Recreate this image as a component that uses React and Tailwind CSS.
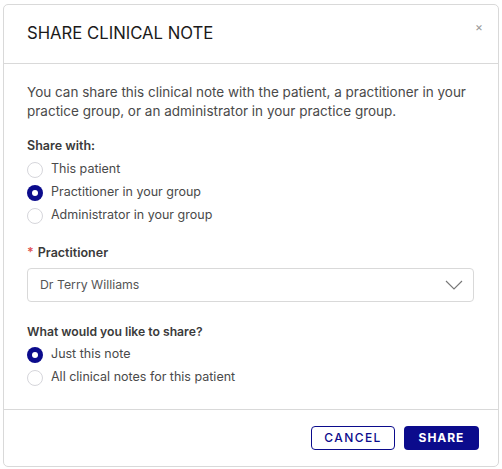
import { useState } from 'react';

const shareWith = ['This patient', 'Practitioner in your group', 'Administrator in your group'];
const shareWhat = ['Just this note', 'All clinical notes for this patient'];

function Radio({ label, checked, onSelect }) {
  return (
    <label className="flex h-[23px] cursor-pointer items-center gap-2" onClick={onSelect}>
      <span
        className={`flex h-4 w-4 items-center justify-center rounded-full ${
          checked ? 'bg-[#0b0b8c]' : 'border border-[#d6d6db] bg-white'
        }`}
      >
        {checked && <span className="h-1.5 w-1.5 rounded-full bg-white" />}
      </span>
      <span className="text-[12.5px] text-[#4a4a4a]">{label}</span>
    </label>
  );
}

export default function App() {
  const [target, setTarget] = useState(1);
  const [scope, setScope] = useState(0);

  return (
    <div className="h-[469px] w-[502px] bg-white px-[3px] pt-[4px] font-['Inter',sans-serif]">
      <div className="flex h-[463px] flex-col rounded-[5px] border border-[#d9d9d9] bg-white">
        <header className="flex h-[59px] items-start justify-between border-b border-[#d9d9d9] pl-[23px] pr-[15px]">
          <h2 className="pt-[18px] text-[16.7px] leading-5 text-[#1a1a1a]">SHARE CLINICAL NOTE</h2>
          <button className="pt-[16px] text-[12px] leading-none text-[#9a9a9a]" aria-label="Close">
            ×
          </button>
        </header>

        <div className="flex-1 px-[23px] pt-[19px]">
          <p className="text-[13.5px] leading-[19px] text-[#4a4a4a]">
            You can share this clinical note with the patient, a practitioner in your practice group, or an administrator in your practice group.
          </p>

          <p className="mt-[17px] text-[12.5px] font-semibold leading-4 text-[#3a3a3a]">Share with:</p>
          <div className="mt-[4px] flex flex-col">
            {shareWith.map((label, i) => (
              <Radio key={label} label={label} checked={target === i} onSelect={() => setTarget(i)} />
            ))}
          </div>

          <p className="mt-[18px] text-[12.5px] font-semibold leading-4 text-[#3a3a3a]">
            <span className="mr-1 text-[#e05050]">*</span>Practitioner
          </p>
          <div className="mt-[7px] flex h-[34px] w-[447px] items-center justify-between rounded-[4px] border border-[#d9d9d9] pl-[12px] pr-[10px]">
            <span className="text-[12.3px] text-[#555]">Dr Terry Williams</span>
            <svg width="18" height="10" viewBox="0 0 18 10" fill="none" stroke="#777" strokeWidth="1.1">
              <path d="M1 1l8 8 8-8" />
            </svg>
          </div>

          <p className="mt-[22px] text-[12.2px] font-semibold leading-4 text-[#3a3a3a]">What would you like to share?</p>
          <div className="mt-[3px] flex flex-col">
            {shareWhat.map((label, i) => (
              <Radio key={label} label={label} checked={scope === i} onSelect={() => setScope(i)} />
            ))}
          </div>
        </div>

        <footer className="flex h-[57px] items-start justify-end gap-[9px] border-t border-[#d9d9d9] pr-[19px] pt-[16px]">
          <button className="h-[24px] w-[84px] rounded-[4px] border border-[#0b0b8c] text-[12px] font-medium tracking-[0.12em] text-[#0b0b8c]">
            CANCEL
          </button>
          <button className="h-[24px] w-[75px] rounded-[4px] bg-[#0b0b8c] text-[12px] font-bold tracking-[0.08em] text-white">
            SHARE
          </button>
        </footer>
      </div>
    </div>
  );
}
